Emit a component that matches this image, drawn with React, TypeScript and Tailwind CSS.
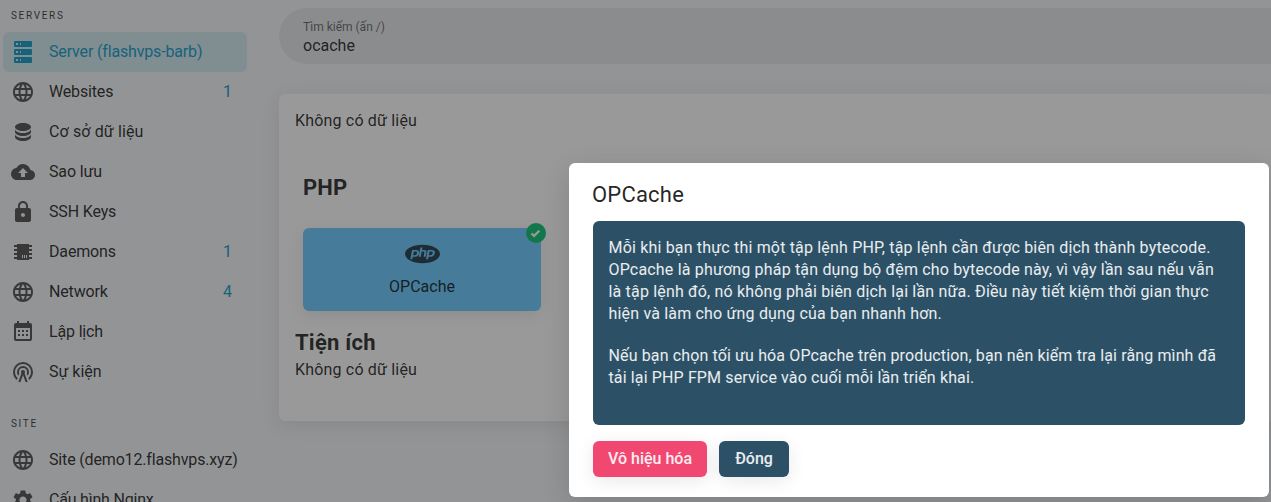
import React from "react";
import { MdLanguage, MdCloudUpload, MdLock, MdSettings } from "react-icons/md";
import { SiPhp } from "react-icons/si";

const icon = "h-6 w-6 shrink-0";

function PathIcon({ d }: { d: string }) {
  return (
    <svg viewBox="0 0 24 24" className={icon} fill="currentColor">
      <path d={d} />
    </svg>
  );
}

const serverPath =
  "M4,1H20A1,1 0 0,1 21,2V6A1,1 0 0,1 20,7H4A1,1 0 0,1 3,6V2A1,1 0 0,1 4,1M4,9H20A1,1 0 0,1 21,10V14A1,1 0 0,1 20,15H4A1,1 0 0,1 3,14V10A1,1 0 0,1 4,9M4,17H20A1,1 0 0,1 21,18V22A1,1 0 0,1 20,23H4A1,1 0 0,1 3,22V18A1,1 0 0,1 4,17M9,5H10V3H9V5M9,13H10V11H9V13M9,21H10V19H9V21M5,3V5H7V3H5M5,11V13H7V11H5M5,19V21H7V19H5Z";
const databasePath =
  "M12,3C7.58,3 4,4.79 4,7C4,9.21 7.58,11 12,11C16.42,11 20,9.21 20,7C20,4.79 16.42,3 12,3M4,9V12C4,14.21 7.58,16 12,16C16.42,16 20,14.21 20,12V9C20,11.21 16.42,13 12,13C7.58,13 4,11.21 4,9M4,14V17C4,19.21 7.58,21 12,21C16.42,21 20,19.21 20,17V14C20,16.21 16.42,18 12,18C7.58,18 4,16.21 4,14Z";
const chipPath =
  "M6,4H18V5H21V7H18V9H21V11H18V13H21V15H18V17H21V19H18V20H6V19H3V17H6V15H3V13H6V11H3V9H6V7H3V5H6V4M11,15V18H12V15H11M13,15V18H14V15H13M15,15V18H16V15H15Z";
const calendarPath =
  "M9,10V12H7V10H9M13,10V12H11V10H13M17,10V12H15V10H17M19,3A2,2 0 0,1 21,5V19A2,2 0 0,1 19,21H5C3.89,21 3,20.1 3,19V5A2,2 0 0,1 5,3H6V1H8V3H16V1H18V3H19M19,19V8H5V19H19M9,14V16H7V14H9M13,14V16H11V14H13M17,14V16H15V14H17Z";
const towerPath =
  "M12,10A2,2 0 0,1 14,12C14,12.5 13.82,12.94 13.53,13.29L16.7,22H14.57L12,14.93L9.43,22H7.3L10.47,13.29C10.18,12.94 10,12.5 10,12A2,2 0 0,1 12,10M12,8A4,4 0 0,0 8,12C8,12.5 8.1,13 8.28,13.46L7.4,15.86C6.53,14.81 6,13.47 6,12A6,6 0 0,1 12,6A6,6 0 0,1 18,12C18,13.47 17.47,14.81 16.6,15.86L15.72,13.46C15.9,13 16,12.5 16,12A4,4 0 0,0 12,8M12,4A8,8 0 0,0 4,12C4,14.36 5,16.5 6.64,17.94L5.92,19.94C3.54,18.11 2,15.23 2,12A10,10 0 0,1 12,2A10,10 0 0,1 22,12C22,15.23 20.46,18.11 18.08,19.94L17.36,17.94C19,16.5 20,14.36 20,12A8,8 0 0,0 12,4Z";

type Item = { label: string; icon: React.ReactNode; count?: number; active?: boolean; tracking?: string };

const servers: Item[] = [
  { label: "Server (flashvps-barb)", icon: <PathIcon d={serverPath} />, active: true },
  { label: "Websites", icon: <MdLanguage className={icon} />, count: 1 },
  { label: "Cơ sở dữ liệu", icon: <PathIcon d={databasePath} />, tracking: "tracking-[0.13px]" },
  { label: "Sao lưu", icon: <MdCloudUpload className={icon} /> },
  { label: "SSH Keys", icon: <MdLock className={icon} /> },
  { label: "Daemons", icon: <PathIcon d={chipPath} />, count: 1 },
  { label: "Network", icon: <MdLanguage className={icon} />, count: 4 },
  { label: "Lập lịch", icon: <PathIcon d={calendarPath} /> },
  { label: "Sự kiện", icon: <PathIcon d={towerPath} />, tracking: "tracking-normal" },
];

const site: Item[] = [
  { label: "Site (demo12.flashvps.xyz)", icon: <MdLanguage className={icon} /> },
  { label: "Cấu hình Nginx", icon: <MdSettings className={icon} />, tracking: "tracking-[-0.2px]" },
];

function NavGroup({ title, items }: { title: string; items: Item[] }) {
  return (
    <section>
      <h2 className="flex h-8 items-center pl-2 text-[10px] tracking-[1.67px] text-black/80">{title}</h2>
      <ul>
        {items.map((item) => (
          <li
            key={item.label}
            className={
              item.active
                ? "flex h-10 items-center rounded-md bg-[#d2eaf0] pr-[15px] pl-2 whitespace-nowrap text-[#0e9ac8]"
                : "flex h-10 items-center rounded-md pr-[15px] pl-2 whitespace-nowrap text-black/87"
            }
          >
            <span className={item.active ? "" : "text-[#4c4c4c]"}>{item.icon}</span>
            <span className={`ml-3.5 w-0 grow ${item.tracking ?? "tracking-[-0.16px]"}`}>{item.label}</span>
            {item.count !== undefined && <span className="text-[#0e9ac8]">{item.count}</span>}
          </li>
        ))}
      </ul>
    </section>
  );
}

export default function App() {
  return (
    <div className="relative h-[502px] w-full overflow-hidden bg-[#f2f5f8] font-[Roboto,sans-serif] text-base leading-6 text-black/87">
      <div className="flex">
        <nav className="flex w-[247px] shrink-0 flex-col gap-4 pl-[3px]">
          <NavGroup title="SERVERS" items={servers} />
          <NavGroup title="SITE" items={site} />
        </nav>
        <main className="ml-8 grow pt-2">
          <div className="flex h-14 flex-col rounded-l-full bg-[#e6e8ea] pt-2.5 pl-6">
            <label className="text-xs leading-[18px] text-black/60">Tìm kiếm (ấn /)</label>
            <span className="leading-5">ocache</span>
          </div>
          <div className="mt-[30px] h-[327px] rounded-l-md bg-white px-4 pt-[15px] shadow-[0_4px_20px_rgba(0,0,0,0.09)]">
            <p className="tracking-[0.18px]">Không có dữ liệu</p>
            <h3 className="mt-[39px] ml-2 text-[22px] leading-8 font-bold tracking-[0.15px]">PHP</h3>
            <div className="relative mt-6 ml-2 flex h-[83px] w-[238px] flex-col items-center rounded-md bg-[#66c8ff] pt-[8px] shadow-[0_4px_16px_rgba(0,0,0,0.09)]">
              <SiPhp className="h-9 w-[35px] text-[#1c3946]" />
              <span className="mt-[3px]">OPCache</span>
              <span className="absolute -top-[5px] -right-[5px] flex h-5 w-5 items-center justify-center rounded-full bg-[#06c270]">
                <svg viewBox="0 0 20 20" className="h-5 w-5" fill="none" stroke="white" strokeWidth="2.3">
                  <path d="M5.5 10.5 8.1 12.9 13.3 7.8" />
                </svg>
              </span>
            </div>
            <h3 className="mt-4 text-[22px] leading-8 font-bold tracking-[0.22px]">Tiện ích</h3>
            <p className="-mt-px tracking-[0.18px]">Không có dữ liệu</p>
          </div>
        </main>
      </div>
      <div className="absolute inset-0 bg-[#212121]/46" />
      <div
        role="dialog"
        className="absolute top-[163px] left-[569px] h-[334px] w-[700px] rounded-md bg-white px-6 pt-4 shadow-[0_8px_28px_rgba(0,0,0,0.14)]"
      >
        <h1 className="-ml-px text-[22px] leading-8 tracking-[0.2px]">OPCache</h1>
        <div className="mt-2.5 h-[204px] rounded-md bg-[#2c5066] py-4 pl-[15.5px] leading-[22px] whitespace-nowrap text-white/90">
          <p className="tracking-[0.177px]">
            Mỗi khi bạn thực thi một tập lệnh PHP, tập lệnh cần được biên dịch thành bytecode.
            <br />
            OPcache là phương pháp tận dụng bộ đệm cho bytecode này, vì vậy lần sau nếu vẫn
            <br />
            là tập lệnh đó, nó không phải biên dịch lại lần nữa. Điều này tiết kiệm thời gian thực
            <br />
            hiện và làm cho ứng dụng của bạn nhanh hơn.
          </p>
          <p className="mt-5 tracking-[0.13px]">
            Nếu bạn chọn tối ưu hóa OPcache trên production, bạn nên kiểm tra lại rằng mình đã
            <br />
            tải lại PHP FPM service vào cuối mỗi lần triển khai.
          </p>
        </div>
        <div className="mt-4 flex gap-3 font-medium text-white/90">
          <button className="h-9 w-[114px] rounded-md bg-[#f14871] shadow-[0_4px_18px_rgba(0,0,0,0.09)]">Vô hiệu hóa</button>
          <button className="h-9 w-[70px] rounded-md bg-[#2c5066] shadow-[0_4px_18px_rgba(0,0,0,0.09)]">Đóng</button>
        </div>
      </div>
    </div>
  );
}
